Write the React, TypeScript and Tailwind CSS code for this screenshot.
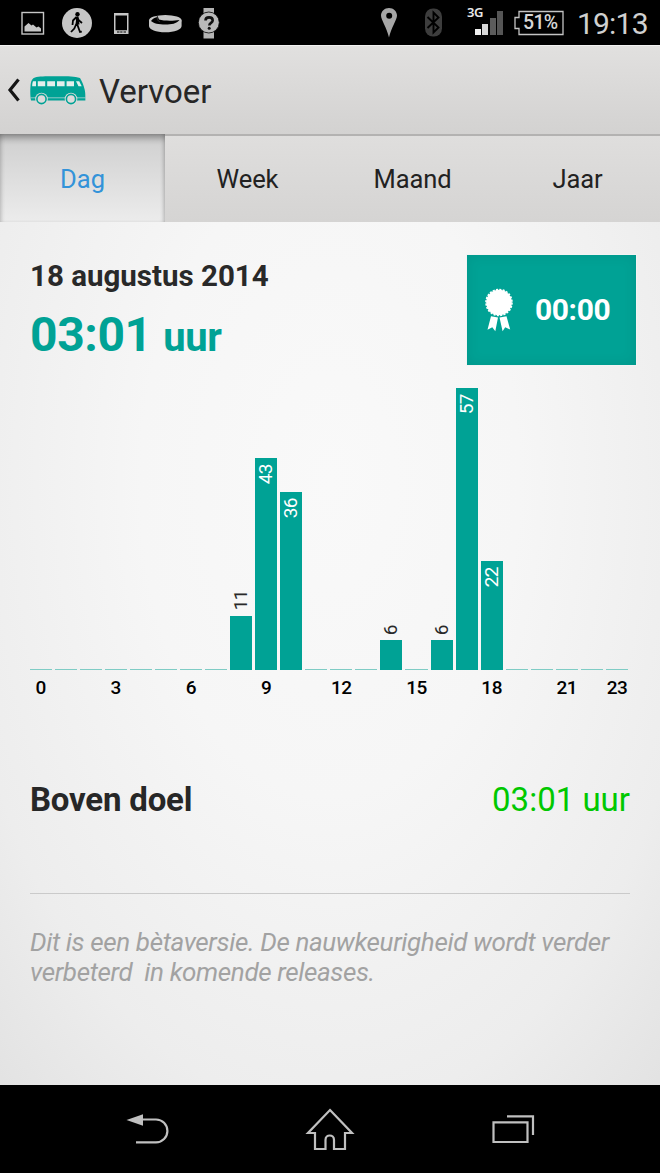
import React from "react";

type Bar = {
  hour: number;
  minutes: number;
};

const minutesByHour: Record<number, number> = {
  8: 11,
  9: 43,
  10: 36,
  14: 6,
  16: 6,
  17: 57,
  18: 22,
};

const bars: Bar[] = Array.from({ length: 24 }, (_, hour) => ({
  hour,
  minutes: minutesByHour[hour] || 0,
}));

const axisHours = [0, 3, 6, 9, 12, 15, 18, 21, 23];

const tabs = ["Dag", "Week", "Maand", "Jaar"];

const StatusBar = () => {
  return (
    <div className="h-[45px] shrink-0 bg-black flex items-center">
      <svg className="w-[240px] h-[45px]" viewBox="0 0 240 45">
        <rect x="22" y="12.5" width="21.5" height="21.5" fill="none" stroke="#c6c6c6" strokeWidth="1.4" />
        <path d="M24.500 31.500v-5l4-3.500 3 2.500 1.500-1 3.500 3 2-1 2.500 2v3z" fill="#c6c6c6" />
        <circle cx="77" cy="23" r="15" fill="#c6c6c6" />
        <circle cx="77.500" cy="14.300" r="2.200" fill="#000" />
        <path
          d="M76.500 17l-3.500 3.500-.5 4.500M76.500 17l2.500 3.500 3 2.500M77 18l.3 6.500 2.700 7.500 1.800-.3M76.300 24l-2 4.500-3.300 3.500"
          fill="none"
          stroke="#000"
          strokeWidth="1.800"
        />
        <path d="M76.500 16.500h2l1 8h-4z" fill="#000" />
        <path d="M114 13h14.500v21H114zM115.500 15.500v14.700h11.500V15.500z" fill="#c6c6c6" fillRule="evenodd" />
        <path d="M117 32h2.500M120.200 32h2.300M123.500 32h2.500" stroke="#000" strokeWidth="1.200" />
        <path d="M149 20.500v5.500c0 3.500 7 6.300 16.300 6.300s16.300-2.800 16.300-6.300v-5.500z" fill="#c6c6c6" />
        <ellipse cx="165.300" cy="20.500" rx="16.300" ry="5.500" fill="#c6c6c6" />
        <path d="M151 21c1.500-2.300 4-3.500 7-4l1 2.500c5 1.500 14 1.500 20.500.5-3 3.800-8 4.500-14 4.500-7 0-12-1-14.500-3.500z" fill="#000" />
        <path d="M157.500 15.500c-1 3 0 5.500 2.500 6.500" fill="none" stroke="#333" strokeWidth="1" />
        <path d="M203.500 8h10.500v7h-10.500zM203.500 31h10.500v7.500h-10.500z" fill="#b4b4b4" />
        <circle cx="208.800" cy="22.500" r="10.500" fill="#b9b9b9" stroke="#000" strokeWidth=".8" />
        <path
          d="M205.500 20.500c0-4.200 7.200-4.200 7.200 0 0 2.500-3.400 2.300-3.400 5"
          fill="none"
          stroke="#111"
          strokeWidth="2.600"
        />
        <circle cx="209.200" cy="28.300" r="1.500" fill="#111" />
      </svg>
      <svg className="ml-[140px] w-[70px] h-[45px]" viewBox="380 0 70 45">
        <path
          d="M389 8c-4.500 0-8 3.400-8 7.600C381 20 386.500 27 389 37.500c2.500-10.500 8-17.500 8-21.900C397 11.400 393.500 8 389 8zm.2 4.800a3 3 0 110 6 3 3 0 010-6z"
          fill="#a6a6a6"
          fillRule="evenodd"
        />
        <rect x="425" y="8.500" width="17" height="28" rx="8" fill="#3d3d3d" />
        <path d="M427.500 17l11 10.500-5 5V12.500l5 5L427.500 28" fill="none" stroke="#000" strokeWidth="1.900" />
      </svg>
      <div className="ml-[17px] w-[36px] h-[45px] flex flex-col">
        <span className="mt-[5px] text-[13px] leading-[15px] font-['Noto_Sans'] font-semibold tracking-[-0.5px] text-[#e8e8e8]">3G</span>
        <div className="-mt-[9px] ml-2 h-[24px] flex items-end gap-[1.500px]">
          <div className="w-[6px] h-[6px] bg-[#f0f0f0]"></div>
          <div className="w-[6px] h-[11px] bg-[#d6d6d6]"></div>
          <div className="w-[6px] h-[17px] bg-[#5c5c5c]"></div>
          <div className="w-[6px] h-[24px] bg-[#555]"></div>
        </div>
      </div>
      <div className="relative ml-[11px] w-[50px] h-[26px] flex items-center">
        <svg className="absolute inset-0" width="50" height="26" viewBox="0 0 50 26">
          <path d="M5 1.500h44v23H5v-6H1v-11h4z" fill="none" stroke="#c4c4c4" strokeWidth="1.300" />
        </svg>
        <span className="ml-[9px] pt-px text-[19.500px] font-medium tracking-[-0.700px] text-[#d6d6d6]">51%</span>
      </div>
      <span className="ml-[13px] pt-0.5 text-[30px] tracking-[-0.800px] text-[#d0d0d0]">19:13</span>
    </div>
  );
};

const Header = () => {
  return (
    <header className="h-[89px] shrink-0 flex items-center border-t border-[#f2f2f2] bg-linear-to-b from-[#e1e0df] to-[#d3d2d1]">
      <svg className="ml-[7px] w-[14px] h-[26px]" viewBox="0 0 14 26">
        <path d="M11.500 2.500L3 13l8.500 10.500" fill="none" stroke="#151515" strokeWidth="3.200" />
      </svg>
      <svg className="ml-[9px] mt-0.5 w-[56px] h-[30px]" viewBox="0 0 56 30">
        <path
          d="M5 1.500C9 .3 15 .3 25 .3c12 0 19-.1 25 1.700 1.800 3 3.800 7.500 4.500 11 .8 3 .9 5 .9 11.500H1C0 19 .2 12 .7 8 1.200 4.500 2.500 2.200 5 1.500z"
          fill="#00a295"
        />
        <path
          d="M3 5.300h3v5H2.200c0-2 .2-3.500.8-5zM7.800 5.300h7.400v5H7.800zM17.200 5.300h7.800v5h-7.800zM27 5.300h7.600v5H27zM36.600 5.300H44v5h-7.400zM46 5.300h3.200l2.500 5H48.500z"
          fill="#e1efec"
        />
        <path d="M.5 21.800h55" stroke="#c9dedb" strokeWidth=".7" />
        <circle cx="11.500" cy="23" r="6.300" fill="#dcdbda" />
        <circle cx="11.500" cy="23" r="4.600" fill="#dcdbda" stroke="#00a295" strokeWidth="1.600" />
        <circle cx="41" cy="23" r="6.300" fill="#dcdbda" />
        <circle cx="41" cy="23" r="4.600" fill="#dcdbda" stroke="#00a295" strokeWidth="1.600" />
      </svg>
      <h1 className="ml-[13px] pt-1 text-[33px] text-[#272727]">Vervoer</h1>
    </header>
  );
};

const Tabs = () => {
  return (
    <nav className="h-[88px] shrink-0 grid grid-cols-4 text-[25.500px] text-[#222]">
      {tabs.map((tab, i) => (
        <button
          key={tab}
          className={
            i === 0
              ? "pt-0.5 text-[#3393d9] bg-linear-to-b from-[#cfcfcf] to-[#ececec] shadow-[inset_0_7px_7px_-3px_rgba(0,0,0,0.35),inset_3px_0_4px_-2px_rgba(0,0,0,0.15),inset_-3px_0_4px_-2px_rgba(0,0,0,0.18)]"
              : "bg-linear-to-b from-[#dfdedd] to-[#d5d4d3] border-t-2 border-[#b3b2b1] tracking-[-0.100px]"
          }
        >
          {tab}
        </button>
      ))}
    </nav>
  );
};

const Summary = () => {
  return (
    <div className="flex justify-between pl-[30px] pr-6 pt-[33px]">
      <div>
        <p className="mt-[3px] text-[29.500px] leading-[36px] font-bold text-[#292929]">18 augustus 2014</p>
        <p className="mt-[13px] text-[48px] leading-[56px] font-bold tracking-[-0.400px] text-[#00a295]">
          03:01 <span className="text-[40px]">uur</span>
        </p>
      </div>
      <div className="w-[169px] h-[110px] flex items-center bg-[#00a295] shadow-[inset_0_0_14px_rgba(0,0,0,0.08),0_0_0_1px_#f3f3f3]">
        <svg className="ml-[18px] w-[28px] h-[44px]" viewBox="0 0 28 44">
          <circle cx="14" cy="14.500" r="12.800" fill="#fff" />
          <circle cx="14" cy="14.500" r="13" fill="none" stroke="#fff" strokeWidth="1.600" strokeDasharray="2.100 1.300" />
          <path d="M6 28.300l7 1.200-2.700 13.800-3-4-4.800 2.500z" fill="#fff" />
          <path d="M14.500 29.500l7-1.200 3.700 13.300-5-2.300-2.600 3.900z" fill="#fff" />
        </svg>
        <span className="ml-[22px] pb-0.5 text-[30px] font-bold tracking-[-0.400px] text-white">00:00</span>
      </div>
    </div>
  );
};

const Chart = () => {
  return (
    <div className="mt-[22px] pl-[29.500px] pr-8">
      <div className="h-[282px] grid grid-cols-24 gap-x-[3px] items-end">
        {bars.map(({ hour, minutes }) => (
          <div key={hour} className="flex flex-col items-center">
            {minutes > 0 && minutes < 20 && (
              <span className="mb-[5px] rotate-180 [writing-mode:vertical-rl] text-[19px] leading-[22px] tracking-[-0.500px] text-[#292929]">
                {minutes}
              </span>
            )}
            <div
              className={minutes ? "w-full bg-[#00a295] flex justify-center" : "w-full bg-[#7fccc5]"}
              style={{ height: minutes ? minutes * 4.94 : 1 }}
            >
              {minutes >= 20 && (
                <span className="mt-[6px] h-fit rotate-180 [writing-mode:vertical-rl] text-[19px] leading-[22px] tracking-[-0.500px] text-white">
                  {minutes}
                </span>
              )}
            </div>
          </div>
        ))}
      </div>
      <div className="mt-[7px] grid grid-cols-24 gap-x-[3px] text-[19px] leading-[22px] tracking-[-0.500px] font-medium text-black">
        {bars.map(({ hour }) => (
          <span key={hour} className="flex justify-center">
            {axisHours.includes(hour) && hour}
          </span>
        ))}
      </div>
    </div>
  );
};

const App = () => {
  return (
    <div className="w-full h-[1173px] flex flex-col bg-black font-[Roboto,sans-serif]">
      <StatusBar />
      <Header />
      <Tabs />
      <main className="flex-1 bg-[radial-gradient(ellipse_540px_900px_at_330px_260px,#f9f9f9_0%,#f6f6f6_35%,#ededed_70%,#dedede_100%)]">
        <Summary />
        <Chart />
        <div className="mt-[81px] mx-[30px] flex items-center justify-between text-[33px] leading-[40px]">
          <p className="font-bold tracking-[-0.200px] text-[#272727]">Boven doel</p>
          <p className="text-[#00c800]">03:01 uur</p>
        </div>
        <hr className="mt-[73px] mx-[30px] border-[#cacaca]" />
        <p className="mt-[33px] mx-[30px] text-[26px] leading-[30px] tracking-[-0.370px] italic whitespace-pre text-[#a2a2a2]">
          {"Dit is een bètaversie. De nauwkeurigheid wordt verder\nverbeterd  in komende releases."}
        </p>
      </main>
      <footer className="h-[88px] shrink-0 bg-black flex items-center justify-center">
        <svg className="w-[410px] h-[50px]" viewBox="125 1104 410 50" fill="none" stroke="#c0c0c0" strokeWidth="2.200">
          <path d="M142 1119.500h14a11.400 11.400 0 010 22.800h-20" />
          <path d="M126.500 1120l16.500-5.700v11.400z" fill="#c0c0c0" stroke="none" />
          <path d="M330 1110l22 23h-7v16h-11v-9c0-6-8.500-6-8.500 0v9H315v-16h-7z" />
          <path d="M493.500 1122.300h34v19.700h-34zM507 1116.300h26v18.700" />
        </svg>
      </footer>
    </div>
  );
};

export default App;
